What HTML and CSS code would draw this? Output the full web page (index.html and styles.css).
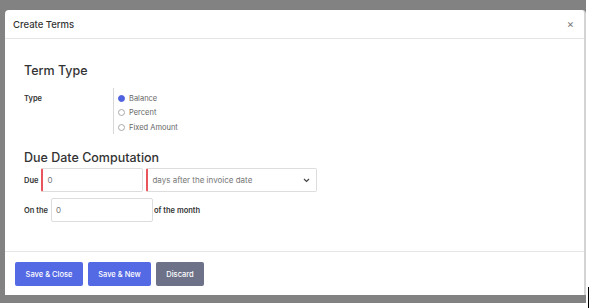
FILE: index.html
```html
<!DOCTYPE html>
<html>
<head>
    <meta charset="utf-8">
    <link rel="stylesheet" href="styles.css">
</head>
<body>
<div class="backdrop">
    <div class="modal">
        <div class="modal-header">
            <span class="modal-title">Create Terms</span>
            <span class="close">&times;</span>
        </div>
        <div class="modal-body">
            <h2 class="section-title">Term Type</h2>
            <div class="type-row">
                <div class="label">Type</div>
                <div class="radio-group">
                    <div class="radio"><span class="dot checked"></span>Balance</div>
                    <div class="radio"><span class="dot"></span>Percent</div>
                    <div class="radio"><span class="dot"></span>Fixed Amount</div>
                </div>
            </div>
            <h2 class="section-title due-title">Due Date Computation</h2>
            <div class="field-row">
                <div class="label">Due</div>
                <div class="input required">0</div>
                <div class="select required">
                    <span>days after the invoice date</span>
                    <svg width="7" height="5" viewBox="0 0 7 5"><path d="M1 1 L3.5 3.5 L6 1" fill="none" stroke="#444" stroke-width="1.2"/></svg>
                </div>
            </div>
            <div class="field-row on-row">
                <div class="label">On the</div>
                <div class="input">0</div>
                <div class="label">of the month</div>
            </div>
        </div>
        <div class="modal-footer">
            <button class="btn primary">Save &amp; Close</button>
            <button class="btn primary">Save &amp; New</button>
            <button class="btn secondary">Discard</button>
        </div>
    </div>
</div>
<div class="cursor"></div>
</body>
</html>
```
FILE: styles.css
```css
body {
    margin: 0;
    background: #fff;
    font-family: Inter, "Noto Sans", sans-serif;
    color: #333;
}

.backdrop {
    /* grey overlay behind the dialog */
    width: 581px;
    height: 293px;
    padding: 10px 0 0 5px;
    background: #828282;
}

.modal {
    width: 579px;
    height: 285px;
    background: #fff;
    border-radius: 4px 4px 0 0;
    border-right: 2px solid #d4d4d4;
    display: flex;
    flex-direction: column;
}

.modal-header {
    height: 28px;
    padding: 0 10px 0 8px;
    border-bottom: 1px solid #e6e6e6;
    display: flex;
    align-items: center;
    justify-content: space-between;
}

.modal-title {
    font-size: 9.5px;
    font-weight: 500;
    color: #333;
}

.close {
    font-size: 11px;
    color: #777;
}

.modal-body {
    flex: 1;
    padding: 0 19px;
}

.section-title {
    margin: 24px 0 0;
    font-size: 12.5px;
    font-weight: 500;
    line-height: 16px;
    color: #333;
}

.due-title {
    margin-top: 16px;
}

.label {
    font-size: 7.5px;
    font-weight: 600;
    color: #333;
}

.type-row {
    display: flex;
    margin-top: 9px;
}

.type-row .label {
    width: 89px;
    padding-top: 6px;
}

.radio-group {
    border-left: 1px solid #d8d8d8;
    padding: 0 0 0 4px;
    height: 46px;
}

.radio {
    display: flex;
    align-items: center;
    height: 14.5px;
    font-size: 7.5px;
    color: #666;
}

.radio:first-child {
    margin-top: 3px;
}

.dot {
    width: 5px;
    height: 5px;
    border: 1px solid #aaa;
    border-radius: 50%;
    margin-right: 4px;
}

.dot.checked {
    background: #4f62e0;
    border-color: #4f62e0;
}

.field-row {
    display: flex;
    align-items: center;
    gap: 3px;
    margin-top: 2px;
}

.on-row {
    margin-top: 6px;
}

.input, .select {
    box-sizing: border-box;
    height: 24px;
    border: 1px solid #ddd;
    border-radius: 2px;
    display: flex;
    align-items: center;
    padding-left: 4px;
    font-size: 8px;
    color: #777;
}

.input {
    width: 102px;
}

.select {
    width: 171px;
    justify-content: space-between;
    padding-right: 6px;
}

.required {
    border-left: 2px solid #e8555d;
}

.on-row .input + .label {
    margin-left: -2px;
}

.modal-footer {
    height: 33px;
    border-top: 1px solid #e6e6e6;
    padding: 10px 10px 0;
    display: flex;
    align-items: flex-start;
    gap: 5px;
}

.btn {
    height: 24px;
    border: none;
    border-radius: 2px;
    padding: 0;
    font-family: Inter, "Noto Sans", sans-serif;
    font-size: 7.5px;
    font-weight: 500;
    color: #fff;
}

.primary {
    background: #5469e4;
}

.btn.primary:first-child {
    width: 68px;
}

.btn.primary + .btn.primary {
    width: 63px;
}

.secondary {
    width: 48px;
    background: #6d7289;
}

.cursor {
    /* text caret left in the capture */
    position: absolute;
    left: 588px;
    top: 287px;
    width: 1px;
    height: 21px;
    background: #000;
}
```
